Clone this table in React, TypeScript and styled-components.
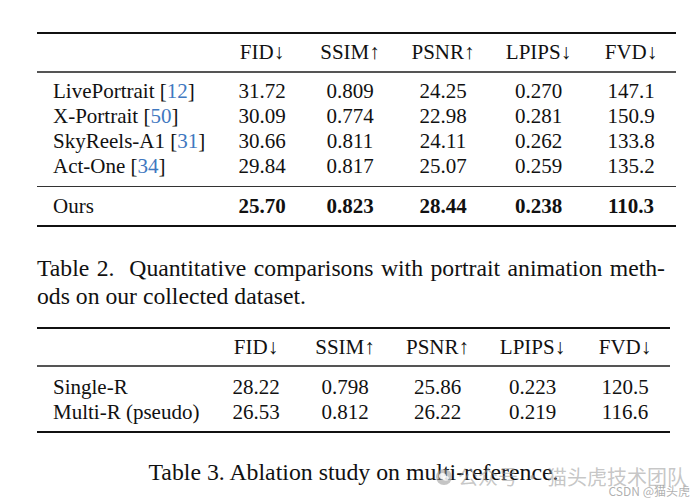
import React from "react";
import styled, { createGlobalStyle } from "styled-components";

const GlobalStyle = createGlobalStyle`
  html, body {
    margin: 0;
    padding: 0;
    background: #fff;
  }
  body {
    font-family: "Liberation Serif", "Times New Roman", serif;
    color: #111;
  }
`;

const Page = styled.div`
  position: relative;
  width: 698px;
  height: 504px;
  overflow: hidden;
  padding: 32px 0 0 37px;
  box-sizing: border-box;
`;

const Table = styled.div<{ $width: number }>`
  width: ${(p) => p.$width}px;
  font-size: 21px;
`;

const Rule = styled.div<{ $thick?: boolean }>`
  height: ${(p) => (p.$thick ? 2 : 1)}px;
  background: ${(p) => (p.$thick ? "#111" : "#333")};
`;

const MidRule = styled.div`
  height: 2px;
  background: #555;
`;

const Body = styled.div<{ $top: number; $bottom: number }>`
  padding: ${(p) => p.$top}px 0 ${(p) => p.$bottom}px;
`;

const Row = styled.div<{ $cols: string; $h: number; $bold?: boolean }>`
  display: grid;
  grid-template-columns: ${(p) => p.$cols};
  height: ${(p) => p.$h}px;
  line-height: ${(p) => p.$h}px;
  font-weight: ${(p) => (p.$bold ? 700 : 400)};
  white-space: nowrap;
`;

const Name = styled.div`
  padding-left: 16px;
`;

const Cell = styled.div`
  text-align: center;
`;

const Cite = styled.span`
  color: #3f78c0;
`;

const Caption = styled.div`
  font-size: 23.7px;
  line-height: 28px;
  width: 628px;
  margin-top: 27px;
`;

const CaptionLine = styled.div<{ $justify?: boolean }>`
  text-align: ${(p) => (p.$justify ? "justify" : "left")};
  text-align-last: ${(p) => (p.$justify ? "justify" : "auto")};
  white-space: nowrap;
`;

const SecondTable = styled(Table)`
  margin-top: 17px;
`;

const Caption3 = styled.div`
  width: 633px;
  text-align: center;
  font-size: 23.8px;
  line-height: 28px;
  margin-top: 25px;
`;

const Watermark = styled.div`
  position: absolute;
  left: 436px;
  top: 462px;
  display: flex;
  align-items: center;
  gap: 6px;
  font-family: "Noto Sans CJK SC", sans-serif;
  font-size: 20px;
  color: rgba(150, 150, 150, 0.55);
  white-space: nowrap;
`;

const Csdn = styled.div`
  position: absolute;
  right: 8px;
  top: 482px;
  font-family: "Noto Sans CJK SC", "Liberation Sans", sans-serif;
  font-size: 12px;
  color: rgba(140, 140, 140, 0.7);
  white-space: nowrap;
`;

const cols1 = "182px 86px 90px 96px 95px 90px";
const cols2 = "175px 88px 90px 95px 95px 90px";
const heads = ["FID↓", "SSIM↑", "PSNR↑", "LPIPS↓", "FVD↓"];

const rows1: [string, string, string[]][] = [
  ["LivePortrait", "12", ["31.72", "0.809", "24.25", "0.270", "147.1"]],
  ["X-Portrait", "50", ["30.09", "0.774", "22.98", "0.281", "150.9"]],
  ["SkyReels-A1", "31", ["30.66", "0.811", "24.11", "0.262", "133.8"]],
  ["Act-One", "34", ["29.84", "0.817", "25.07", "0.259", "135.2"]],
];

const rows2: [string, string[]][] = [
  ["Single-R", ["28.22", "0.798", "25.86", "0.223", "120.5"]],
  ["Multi-R (pseudo)", ["26.53", "0.812", "26.22", "0.219", "116.6"]],
];

const WeChatIcon = () => (
  <svg width="16" height="16" viewBox="0 0 16 16">
    <circle cx="8" cy="8" r="8" fill="rgba(150,150,150,0.55)" />
    <ellipse cx="6.5" cy="7" rx="3.6" ry="3" fill="#fff" opacity="0.8" />
    <ellipse cx="9.8" cy="9.3" rx="3" ry="2.5" fill="#fff" opacity="0.8" />
  </svg>
);

export default function App() {
  return (
    <>
      <GlobalStyle />
      <Page>
        <Table $width={639}>
          <Rule $thick />
          <Row $cols={cols1} $h={37}>
            <Name />
            {heads.map((h) => (
              <Cell key={h}>{h}</Cell>
            ))}
          </Row>
          <MidRule />
          <Body $top={6} $bottom={7}>
            {rows1.map(([name, ref, vals]) => (
              <Row key={name} $cols={cols1} $h={25}>
                <Name>
                  {name} [<Cite>{ref}</Cite>]
                </Name>
                {vals.map((v, i) => (
                  <Cell key={i}>{v}</Cell>
                ))}
              </Row>
            ))}
          </Body>
          <Rule />
          <Row $cols={cols1} $h={38}>
            <Name>Ours</Name>
            {["25.70", "0.823", "28.44", "0.238", "110.3"].map((v, i) => (
              <Cell key={i}>
                <b>{v}</b>
              </Cell>
            ))}
          </Row>
          <Rule $thick />
        </Table>

        <Caption>
          <CaptionLine $justify>
            Table 2.&nbsp; Quantitative comparisons with portrait animation meth-
          </CaptionLine>
          <CaptionLine>ods on our collected dataset.</CaptionLine>
        </Caption>

        <SecondTable $width={633}>
          <Rule $thick />
          <Row $cols={cols2} $h={36}>
            <Name />
            {heads.map((h) => (
              <Cell key={h}>{h}</Cell>
            ))}
          </Row>
          <MidRule />
          <Body $top={8} $bottom={6}>
            {rows2.map(([name, vals]) => (
              <Row key={name} $cols={cols2} $h={25}>
                <Name>{name}</Name>
                {vals.map((v, i) => (
                  <Cell key={i}>{v}</Cell>
                ))}
              </Row>
            ))}
          </Body>
          <Rule $thick />
        </SecondTable>

        <Caption3>Table 3. Ablation study on multi-reference.</Caption3>

        <Watermark>
          <WeChatIcon />
          <span>公众号 · 猫头虎技术团队</span>
        </Watermark>
        <Csdn>CSDN @猫头虎</Csdn>
      </Page>
    </>
  );
}
